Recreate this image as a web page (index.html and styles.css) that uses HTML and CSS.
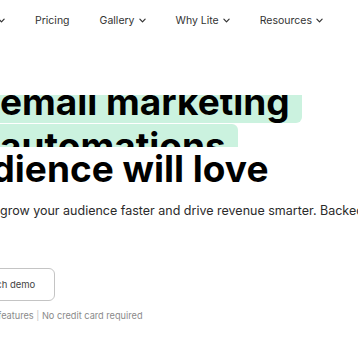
FILE: index.html
```html
<!DOCTYPE html>
<html lang="en">
<head>
    <meta charset="UTF-8">
    <meta name="viewport" content="width=device-width, initial-scale=1.0">
    <title>Email marketing your audience will love</title>
    <link rel="stylesheet" href="styles.css">
</head>
<body>

    <nav class="nav">
        <a class="nav-item" href="#">Features <svg class="chev" viewBox="0 0 8 5"><path d="M1 1l3 3 3-3"/></svg></a>
        <a class="nav-item" href="#">Pricing</a>
        <a class="nav-item" href="#">Gallery <svg class="chev" viewBox="0 0 8 5"><path d="M1 1l3 3 3-3"/></svg></a>
        <a class="nav-item" href="#">Why Lite <svg class="chev" viewBox="0 0 8 5"><path d="M1 1l3 3 3-3"/></svg></a>
        <a class="nav-item" href="#">Resources <svg class="chev" viewBox="0 0 8 5"><path d="M1 1l3 3 3-3"/></svg></a>
    </nav>

    <section class="hero">
        <h1 class="headline">
            <span class="rotator">
                <span class="rotator-track">
                    <span class="word">email marketing</span>
                    <span class="word">automations</span>
                </span>
            </span>
            <span class="tail">audience will love</span>
        </h1>

        <p class="lead">grow your audience faster and drive revenue smarter. Backed by award-winning support.</p>

        <div class="actions">
            <a class="btn-outline" href="#">Watch demo</a>
        </div>

        <p class="note">features <span class="sep">|</span> No credit card required</p>
    </section>

</body>
</html>
```

FILE: styles.css
```css
/* General Styles */
body {
    margin: 0;
    width: 358px;
    height: 358px;
    overflow: hidden;
    font-family: Inter, "Noto Sans", sans-serif;
    background-color: #ffffff;
    color: #000000;
}

a {
    color: inherit;
    text-decoration: none;
}

/* Top navigation */
.nav {
    display: flex;
    align-items: center;
    gap: 30px;
    height: 40px;
    margin-left: -49px;
    font-size: 10.5px;
    color: #333333;
    white-space: nowrap;
}

.nav-item {
    display: flex;
    align-items: center;
    gap: 4px;
}

.chev {
    width: 7px;
    height: 5px;
    fill: none;
    stroke: #333333;
    stroke-width: 1.4;
    stroke-linecap: round;
    stroke-linejoin: round;
}

/* Hero */
.hero {
    padding-top: 55px;
}

.headline {
    margin: 0;
    font-size: 37px;
    font-weight: 700;
    line-height: 43px;
    white-space: nowrap;
}

/* Rotating highlighted words, caught mid-slide */
.rotator {
    display: block;
    height: 52px;
    overflow: hidden;
}

.rotator-track {
    display: block;
    transform: translateY(-15px);
}

.word {
    display: block;
    width: fit-content;
    margin-left: -11px;
    margin-bottom: 1px;
    padding: 0 12px 0 11px;
    background-color: #cbf2df;
    border-radius: 6px;
}

.tail {
    display: block;
    margin-left: -53px;
}

/* Lead text */
.lead {
    margin: 12px 0 0;
    font-size: 12.5px;
    line-height: 18px;
    color: #2b2b2b;
    white-space: nowrap;
}

/* Buttons */
.actions {
    display: flex;
    margin-top: 48px;
}

.btn-outline {
    display: block;
    margin-left: -42px;
    padding: 8px 19px 8px 20px;
    font-size: 9.5px;
    line-height: 15px;
    color: #444444;
    border: 1px solid #c4c4c4;
    border-radius: 6px;
}

/* Small print */
.note {
    margin: 8px 0 0 -2px;
    font-size: 9.2px;
    line-height: 14px;
    color: #8a8a8a;
    white-space: nowrap;
}

.sep {
    color: #c4c4c4;
}
```
